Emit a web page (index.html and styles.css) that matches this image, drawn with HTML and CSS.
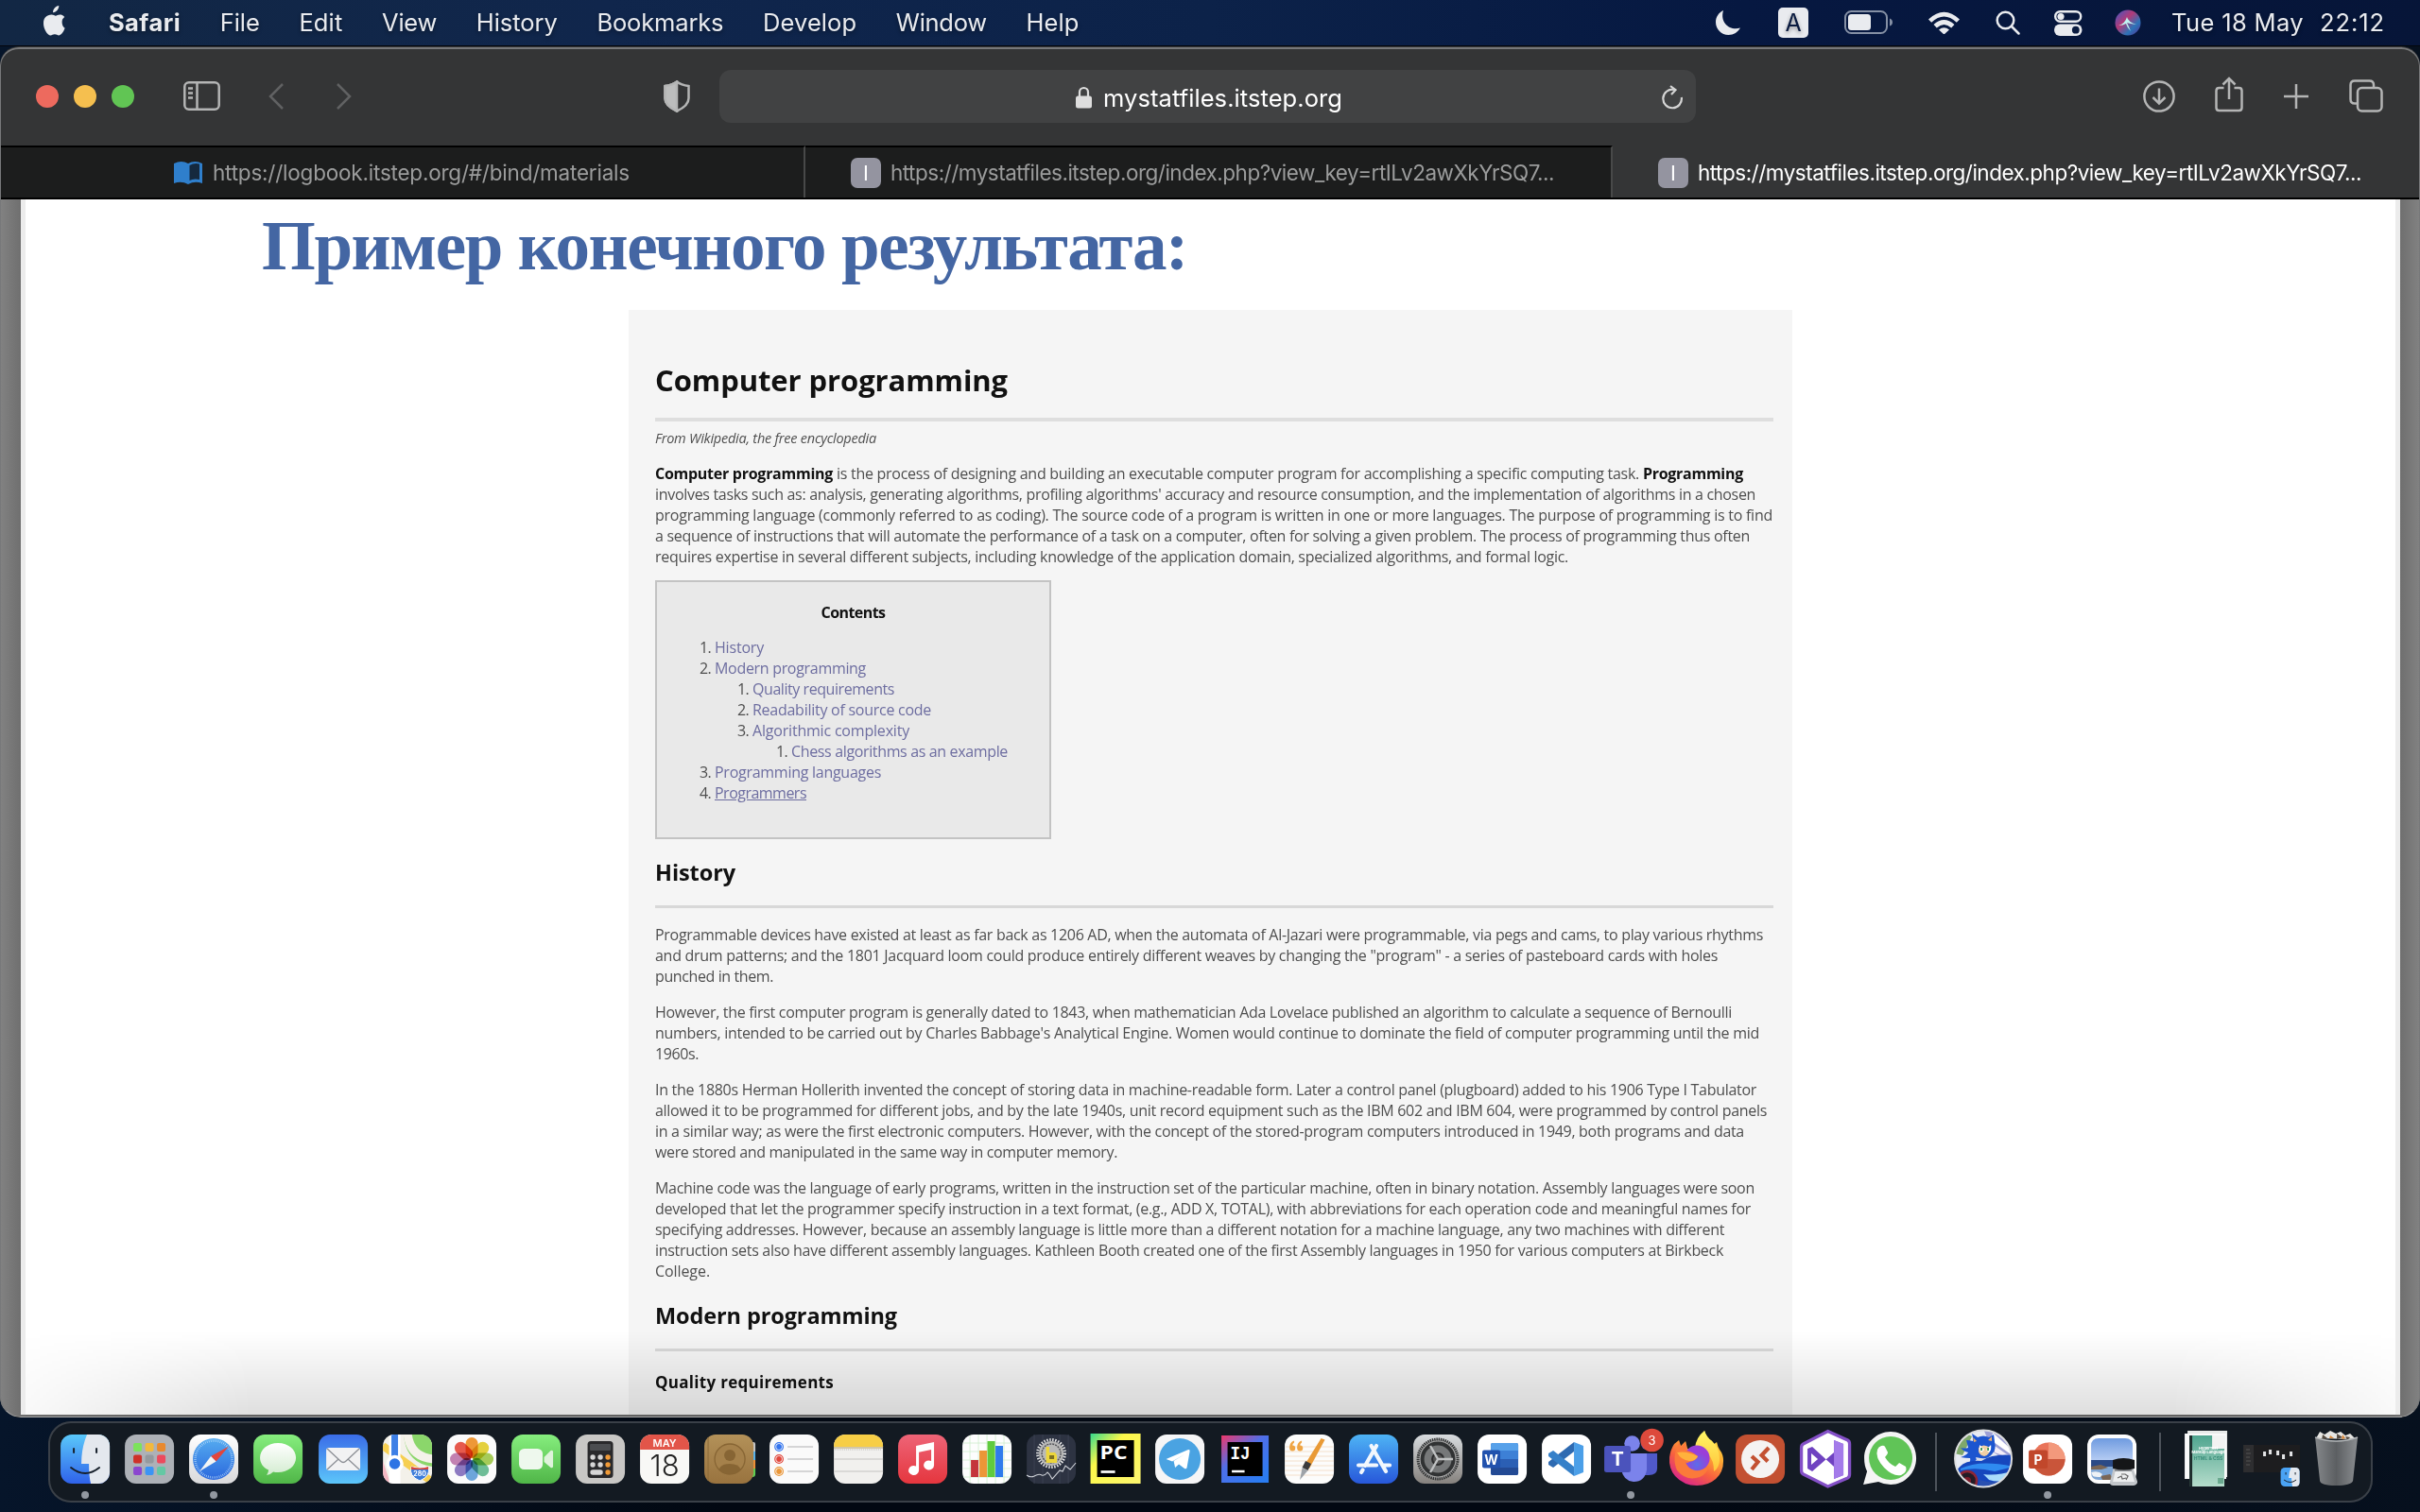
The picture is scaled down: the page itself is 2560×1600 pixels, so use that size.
FILE: index.html
```
<!DOCTYPE html>
<html lang="en">
<head>
<meta charset="utf-8">
<title>mystatfiles.itstep.org</title>
<link rel="stylesheet" href="styles.css">
</head>
<body>
<svg class="defs" width="0" height="0" aria-hidden="true">
<defs>
<linearGradient id="gBlue" x2="0" y2="1"><stop stop-color="#5ac8fa"/><stop offset="1" stop-color="#2f62ea"/></linearGradient>
<linearGradient id="gMail" x2="0" y2="1"><stop stop-color="#3a6ce8"/><stop offset="1" stop-color="#5cc6fa"/></linearGradient>
<linearGradient id="gGreen" x2="0" y2="1"><stop stop-color="#86ee7e"/><stop offset="1" stop-color="#50b648"/></linearGradient>
<linearGradient id="gWhite" x2="0" y2="1"><stop stop-color="#fff"/><stop offset="1" stop-color="#d9d9db"/></linearGradient>
<linearGradient id="gGrey" x2="0" y2="1"><stop stop-color="#d8dcdf"/><stop offset="1" stop-color="#86827e"/></linearGradient>
<linearGradient id="gRed" x2="0" y2="1"><stop stop-color="#ee6477"/><stop offset="1" stop-color="#e5363e"/></linearGradient>
<linearGradient id="gStore" x2="0" y2="1"><stop stop-color="#4eb4f5"/><stop offset="1" stop-color="#2757da"/></linearGradient>
<linearGradient id="gSafari" x2="0" y2="1"><stop stop-color="#55acf0"/><stop offset="1" stop-color="#2b68dd"/></linearGradient>
<linearGradient id="gPc" x2="1" y2="1"><stop stop-color="#35d98d"/><stop offset=".35" stop-color="#fcf84a"/><stop offset="1" stop-color="#fcf570"/></linearGradient>
<linearGradient id="gIj" x2=".8" y2="1"><stop stop-color="#f0386b"/><stop offset=".45" stop-color="#4f6fe8"/><stop offset="1" stop-color="#2a7cf2"/></linearGradient>
<linearGradient id="gBrown" x2="0" y2="1"><stop stop-color="#b39159"/><stop offset="1" stop-color="#99733f"/></linearGradient>
<linearGradient id="gFox" x1=".9" x2=".3" y2="1"><stop stop-color="#fff44f"/><stop offset=".35" stop-color="#ffb132"/><stop offset=".68" stop-color="#f7603f"/><stop offset="1" stop-color="#d9258c"/></linearGradient>
<linearGradient id="gFlame" x2="0" y2="1"><stop stop-color="#fff766"/><stop offset="1" stop-color="#ffc43a"/></linearGradient>
<radialGradient id="gGlobe" cy=".75"><stop stop-color="#5b6de8"/><stop offset="1" stop-color="#9a3fd8"/></radialGradient>
<linearGradient id="gTrash" x2="1" y2="0"><stop stop-color="#85888b"/><stop offset=".5" stop-color="#5c5f62"/><stop offset="1" stop-color="#8b8e91"/></linearGradient>
<linearGradient id="gDoc" x2="0" y2="1"><stop stop-color="#4fa58f"/><stop offset="1" stop-color="#b5dccb"/></linearGradient>
<linearGradient id="gSky" x2="0" y2="1"><stop stop-color="#6f9be0"/><stop offset="1" stop-color="#b7cdf3"/></linearGradient>
<linearGradient id="gBubble" x2="0" y2="1"><stop stop-color="#fff"/><stop offset="1" stop-color="#d3ecd0"/></linearGradient>
<linearGradient id="gSiri" x2="1" y2="1"><stop stop-color="#3a59c8"/><stop offset=".4" stop-color="#b23a78"/><stop offset=".7" stop-color="#2b74b8"/><stop offset="1" stop-color="#5a2a90"/></linearGradient>
</defs>
</svg>

<header class="menubar">
  <svg class="apple" width="26" height="32" viewBox="0 0 26 32"><path d="M18.3 0c.2 3.500-3 7.300-6.200 7.200C11.800 3.900 15 .4 18.300 0zM21.600 16.900c0-3 2.400-4.500 2.700-4.800-1.500-2.100-3.700-2.500-4.600-2.500-2-.2-3.800 1.100-4.800 1.100s-2.500-1.100-4.200-1.100C5.200 9.700 2 13 2 18.700c0 5.700 4.200 12.700 7.500 12.700 1.600 0 2.200-1.100 4.400-1.100 2.200 0 2.700 1.100 4.400 1.100 3.300 0 6-6.300 6.400-7.800-.1 0-3.100-1.400-3.100-6.700z"/></svg>
  <nav class="menus">
    <b data-w="76">Safari</b><span data-w="42">File</span><span data-w="46">Edit</span><span data-w="58">View</span><span data-w="86">History</span><span data-w="134">Bookmarks</span><span data-w="99">Develop</span><span data-w="96">Window</span><span data-w="56">Help</span>
  </nav>
  <div class="status">
    <svg width="26" height="26" viewBox="0 0 26 26"><path d="M8 0C3 2.500 0 7 0 12.500 0 20 6 26 13.500 26 19 26 23.500 23 26 18.500 16 22 4 14 8 0z"/></svg>
    <svg width="32" height="32" viewBox="0 0 32 32"><rect width="32" height="32" rx="5"/><text class="layout-key" x="16" y="25" text-anchor="middle">A</text></svg>
    <svg width="51" height="26" viewBox="0 0 51 26"><rect x="1" y="1" width="44" height="23" rx="6.500" fill="none" stroke="#8590a5" stroke-width="2"/><rect x="4" y="4" width="24" height="17" rx="3.500"/><path d="M48 8.500q3 1 3 4t-3 4z" fill="#8590a5"/></svg>
    <svg width="33" height="24" viewBox="0 0 33 24"><path d="M0 8.500Q16.500-7 33 8.500l-3.200 3.300Q16.500-1 3.200 11.800zM5.500 14q11-10 22 0l-3.300 3.400q-7.700-7-15.400 0zM11 19.500q5.500-4.500 11 0L16.500 24.500z"/></svg>
    <svg width="26" height="26" viewBox="0 0 26 26"><g fill="none" stroke="#e9ebef" stroke-width="2.500"><circle cx="10.500" cy="10.500" r="8.800"/><path d="M17 17l7.500 7.500" stroke-linecap="round"/></g></svg>
    <svg width="30" height="27" viewBox="0 0 30 27"><rect x="1.200" y="1.200" width="27" height="10.500" rx="5.200" fill="none" stroke="#e9ebef" stroke-width="2.400"/><circle cx="7" cy="6.500" r="3.600"/><rect y="14.500" width="29.500" height="12.500" rx="6.200"/><circle cx="22.800" cy="20.700" r="3.900" fill="#0a1b40"/></svg>
    <svg width="28" height="28" viewBox="0 0 28 28"><circle cx="14" cy="14" r="13.500" fill="url(#gSiri)"/><path d="M4 17q7-2 9-9 1 5 10 8-7-1-10-2 2 4 4 9-4-4-5-8-3 2-8 2z" fill="#bff3f2"/></svg>
    <time><span data-w="140">Tue 18 May</span><span data-w="69">22:12</span></time>
  </div>
</header>

<main class="window">
  <div class="toolbar">
    <div class="lights"><i class="red"></i><i class="yellow"></i><i class="green"></i></div>
    <svg class="sidebar-btn" width="39" height="31" viewBox="0 0 39 31"><rect x="1.300" y="1.300" width="36.400" height="28.400" rx="4.500"/><path d="M14.500 1v29M5 7.500h5M5 12.500h5M5 17.500h5"/></svg>
    <svg class="back" width="18" height="30" viewBox="0 0 18 30"><path d="M16 2L3 15l13 13"/></svg>
    <svg class="forward" width="18" height="30" viewBox="0 0 18 30"><path d="M2 2l13 13L2 28"/></svg>
    <svg class="shield" width="28" height="34" viewBox="0 0 28 34"><path d="M14 1.500C10 4.500 5.500 5.500 1.500 6v13c0 7 7 11 12.500 13.500 5.500-2.500 12.500-6.500 12.500-13.500V6C22.500 5.500 18 4.500 14 1.500z"/><path d="M14 1.500C10 4.500 5.500 5.500 1.500 6v13c0 7 7 11 12.500 13.500z" fill="#bcbdbd"/></svg>
    <div class="address">
      <svg width="17" height="24" viewBox="0 0 17 24"><path d="M4 11V6.500a4.500 4.500 0 019 0V11" fill="none" stroke="#dedede" stroke-width="2.200"/><rect y="10.500" width="17" height="13" rx="2.500" fill="#dedede"/></svg>
      <span data-w="253">mystatfiles.itstep.org</span>
      <svg class="reload" width="23" height="27" viewBox="0 0 23 27"><path d="M20.800 13a9.800 9.800 0 11-8-8.200M9 1l5.500 4.200L10 10"/></svg>
    </div>
    <div class="actions">
      <svg width="34" height="34" viewBox="0 0 34 34"><circle cx="17" cy="17" r="15.600"/><path d="M17 8.500v16M10.500 18l6.500 6.500 6.500-6.500"/></svg>
      <svg class="share" width="30" height="38" viewBox="0 0 30 38"><path d="M9.500 12H4.500q-3 0-3 3v18q0 3 3 3h21q3 0 3-3V15q0-3-3-3h-5M15 24V2M8.500 8.500L15 2l6.500 6.500"/></svg>
      <svg width="28" height="28" viewBox="0 0 28 28"><path d="M14 1v26M1 14h26"/></svg>
      <svg width="36" height="35" viewBox="0 0 36 35"><path d="M9 25.500H6q-4.500 0-4.500-4.500V6Q1.500 1.500 6 1.500h15.500Q26 1.500 26 6v3"/><rect x="9" y="9" width="25.500" height="24.500" rx="4.500"/></svg>
    </div>
  </div>
  <div class="tabs">
    <div class="tab">
      <svg width="32" height="26" viewBox="0 0 32 26"><path d="M1 3Q9-1 16 3q7-4 15 0v21q-8-3-15 1Q9 21 1 24z" fill="#2f7fcc"/><path d="M17.500 5q5-3 10.500-1.500V20q-6-1.500-10.500 1z" fill="#15293e"/></svg>
      <span data-w="441">https://logbook.itstep.org/#/bind/materials</span>
    </div>
    <div class="tab"><i>I</i><span data-w="702">https://mystatfiles.itstep.org/index.php?view_key=rtILv2awXkYrSQ7...</span></div>
    <div class="tab current"><i>I</i><span data-w="702">https://mystatfiles.itstep.org/index.php?view_key=rtILv2awXkYrSQ7...</span></div>
  </div>
  <div class="page">
    <div class="slide">
      <h1 class="slide-title"><span data-w="979">Пример конечного результата:</span></h1>
      <article class="article">
        <h1><span data-w="373">Computer programming</span></h1>
        <p class="source"><span data-w="234">From Wikipedia, the free encyclopedia</span></p>
        <p class="lead"><span data-w="1151"><b>Computer programming</b> is the process of designing and building an executable computer program for accomplishing a specific computing task. <b>Programming</b></span><span data-w="1164">involves tasks such as: analysis, generating algorithms, profiling algorithms' accuracy and resource consumption, and the implementation of algorithms in a chosen</span><span data-w="1182">programming language (commonly referred to as coding). The source code of a program is written in one or more languages. The purpose of programming is to find</span><span data-w="1158">a sequence of instructions that will automate the performance of a task on a computer, often for solving a given problem. The process of programming thus often</span><span data-w="966">requires expertise in several different subjects, including knowledge of the application domain, specialized algorithms, and formal logic.</span></p>
        <section class="contents">
          <h4><span data-w="68">Contents</span></h4>
          <ul>
            <li><em>1.</em><a data-w="52">History</a></li>
            <li><em>2.</em><a data-w="160">Modern programming</a></li>
            <li class="l2"><em>1.</em><a data-w="150">Quality requirements</a></li>
            <li class="l2"><em>2.</em><a data-w="189">Readability of source code</a></li>
            <li class="l2"><em>3.</em><a data-w="166">Algorithmic complexity</a></li>
            <li class="l3"><em>1.</em><a data-w="229">Chess algorithms as an example</a></li>
            <li><em>3.</em><a data-w="176">Programming languages</a></li>
            <li><em>4.</em><a class="hover" data-w="97">Programmers</a></li>
          </ul>
        </section>
        <h2><span data-w="85">History</span></h2>
        <p><span data-w="1172">Programmable devices have existed at least as far back as 1206 AD, when the automata of Al-Jazari were programmable, via pegs and cams, to play various rhythms</span><span data-w="1124">and drum patterns; and the 1801 Jacquard loom could produce entirely different weaves by changing the "program" - a series of pasteboard cards with holes</span><span data-w="125">punched in them.</span></p>
        <p><span data-w="1139">However, the first computer program is generally dated to 1843, when mathematician Ada Lovelace published an algorithm to calculate a sequence of Bernoulli</span><span data-w="1168">numbers, intended to be carried out by Charles Babbage's Analytical Engine. Women would continue to dominate the field of computer programming until the mid</span><span data-w="46">1960s.</span></p>
        <p><span data-w="1165">In the 1880s Herman Hollerith invented the concept of storing data in machine-readable form. Later a control panel (plugboard) added to his 1906 Type I Tabulator</span><span data-w="1176">allowed it to be programmed for different jobs, and by the late 1940s, unit record equipment such as the IBM 602 and IBM 604, were programmed by control panels</span><span data-w="1152">in a similar way; as were the first electronic computers. However, with the concept of the stored-program computers introduced in 1949, both programs and data</span><span data-w="489">were stored and manipulated in the same way in computer memory.</span></p>
        <p><span data-w="1163">Machine code was the language of early programs, written in the instruction set of the particular machine, often in binary notation. Assembly languages were soon</span><span data-w="1159">developed that let the programmer specify instruction in a text format, (e.g., ADD X, TOTAL), with abbreviations for each operation code and meaningful names for</span><span data-w="1131">specifying addresses. However, because an assembly language is little more than a different notation for a machine language, any two machines with different</span><span data-w="1130">instruction sets also have different assembly languages. Kathleen Booth created one of the first Assembly languages in 1950 for various computers at Birkbeck</span><span data-w="58">College.</span></p>
        <h2><span data-w="256">Modern programming</span></h2>
        <h3><span data-w="189">Quality requirements</span></h3>
      </article>
    </div>
  </div>
</main>

<footer class="dock">
  <svg viewBox="-8 -14 68 86"><rect width="52" height="52" rx="12" fill="url(#gBlue)"/><path d="M28 0h12a12 12 0 0112 12v28a12 12 0 01-12 12h-8q-2-7-2-21H22Q22 14 28 0z" fill="#e4e8ee"/><g fill="none" stroke="#17202b" stroke-width="2" stroke-linecap="round"><path d="M14 15v4M38 15v4M11 35q15 12 30 0"/></g><circle class="dot" cx="26" cy="64" r="4"/></svg>
  <svg viewBox="-8 -14 68 86"><rect width="52" height="52" rx="12" fill="#adb1b7"/><g><rect x="9" y="9" width="9" height="9" rx="2" fill="#7ce35b"/><rect x="21.500" y="9" width="9" height="9" rx="2" fill="#f2b93d"/><rect x="34" y="9" width="9" height="9" rx="2" fill="#e8892e"/><rect x="9" y="21.500" width="9" height="9" rx="2" fill="#cf3029"/><rect x="21.500" y="21.500" width="9" height="9" rx="2" fill="#94999e"/><rect x="34" y="21.500" width="9" height="9" rx="2" fill="#ec4a5d"/><rect x="9" y="34" width="9" height="9" rx="2" fill="#8b46cf"/><rect x="21.500" y="34" width="9" height="9" rx="2" fill="#3b94f5"/><rect x="34" y="34" width="9" height="9" rx="2" fill="#64c8a4"/></g></svg>
  <svg viewBox="-8 -14 68 86"><rect width="52" height="52" rx="12" fill="url(#gWhite)"/><circle cx="26" cy="26" r="22" fill="url(#gSafari)"/><circle cx="26" cy="26" r="19.500" fill="none" stroke="#c2dffa" stroke-width="2.500" stroke-dasharray=".6 1.400"/><path d="M42 12.500L23 23l5.500 5.500z" fill="#e2453c"/><path d="M11 39l12-16 5.500 5.500z" fill="#f4f5f5"/><circle class="dot" cx="26" cy="64" r="4"/></svg>
  <svg viewBox="-8 -14 68 86"><rect width="52" height="52" rx="12" fill="url(#gGreen)"/><path d="M26 9c11 0 19 7 19 15.500S37 40 26 40q-3 0-5-.5-3 3-7 3.500 2-3 2-5.500C10 35 7 30 7 24.500 7 16 15 9 26 9z" fill="url(#gBubble)"/></svg>
  <svg viewBox="-8 -14 68 86"><rect width="52" height="52" rx="12" fill="url(#gMail)"/><rect x="8" y="14" width="36" height="24" rx="3" fill="#f2f2f3"/><path d="M9 15l14 13q3 3 6 0l14-13M9 37l12-11M43 37L31 26" fill="none" stroke="#8d9096" stroke-width="1.300"/></svg>
  <svg viewBox="-8 -14 68 86"><clipPath id="cMap"><rect width="52" height="52" rx="12"/></clipPath><g clip-path="url(#cMap)"><rect width="52" height="52" fill="#f3f1ea"/><path d="M22 0h30v34Q24 30 22 0z" fill="#8bd66b"/><path d="M26-2q2 26 28 28" fill="none" stroke="#f5f2ea" stroke-width="9"/><path d="M0 12l52 38" stroke="#f6cf51" stroke-width="8"/><path d="M0 28l8 24H0z" fill="#f4b7c3"/><path d="M12.500 0v52" stroke="#fff" stroke-width="12"/><path d="M12.500 0v26" stroke="#3d7fe6" stroke-width="7"/></g><circle cx="12.500" cy="31" r="7.500" fill="#2e74e4" stroke="#fff" stroke-width="3.500"/><path d="M30 34q9 3 18 0 3 10-9 15-12-5-9-15z" fill="#3b7bd9" stroke="#fff"/><path d="M30 34q9 3 18 0v3H30z" fill="#d9443a"/><text class="shield-no" x="39" y="44">280</text></svg>
  <svg viewBox="-8 -14 68 86"><rect width="52" height="52" rx="12" fill="#fbfbfb"/><g class="petals"><rect x="19.500" y="3" width="13" height="22" rx="6.500" fill="#f29b38"/><rect x="19.500" y="3" width="13" height="22" rx="6.500" fill="#e8d43f" transform="rotate(45 26 26)"/><rect x="19.500" y="3" width="13" height="22" rx="6.500" fill="#a9cf59" transform="rotate(90 26 26)"/><rect x="19.500" y="3" width="13" height="22" rx="6.500" fill="#70c09a" transform="rotate(135 26 26)"/><rect x="19.500" y="3" width="13" height="22" rx="6.500" fill="#6fa8df" transform="rotate(180 26 26)"/><rect x="19.500" y="3" width="13" height="22" rx="6.500" fill="#8f7cc4" transform="rotate(225 26 26)"/><rect x="19.500" y="3" width="13" height="22" rx="6.500" fill="#c583b4" transform="rotate(270 26 26)"/><rect x="19.500" y="3" width="13" height="22" rx="6.500" fill="#ea5b4e" transform="rotate(315 26 26)"/></g></svg>
  <svg viewBox="-8 -14 68 86"><rect width="52" height="52" rx="12" fill="url(#gGreen)"/><rect x="8" y="15" width="25" height="22" rx="5.500" fill="#eef8ed"/><path d="M34.500 24l7-7q2.500-1 2.500 1.500v15q0 2.500-2.500 1.500l-7-6z" fill="#dff3dc"/></svg>
  <svg viewBox="-8 -14 68 86"><rect width="52" height="52" rx="12" fill="#c8c7c5"/><rect x="12.500" y="7" width="27" height="39" rx="3.500" fill="#29292b"/><rect x="15" y="10" width="22" height="7" rx="1" fill="#4b4d50"/><g fill="#d6d6d6"><circle cx="18" cy="24" r="2.700"/><circle cx="26" cy="24" r="2.700"/><circle cx="18" cy="32" r="2.700"/><circle cx="26" cy="32" r="2.700"/><rect x="15.300" y="37.300" width="13.400" height="5.400" rx="2.700"/></g><g fill="#f09a37"><circle cx="34" cy="24" r="2.700"/><circle cx="34" cy="32" r="2.700"/><circle cx="34" cy="40" r="2.700"/></g></svg>
  <svg viewBox="-8 -14 68 86"><rect width="52" height="52" rx="12" fill="#f8f8f6"/><path d="M0 16v-4A12 12 0 0112 0h28a12 12 0 0112 12v4z" fill="#e25549"/><text class="cal-month" x="26" y="12.500">MAY</text><text class="cal-day" x="26" y="43.500">18</text></svg>
  <svg viewBox="-8 -14 68 86"><path d="M49 8h3q2 0 2 2v8h-5z" fill="#c4c4c4"/><path d="M49 18h5v9h-5z" fill="#58b3ec"/><path d="M49 27h5v9h-5z" fill="#ee8f37"/><path d="M49 36h5v6q0 3-3 3h-2z" fill="#5fce52"/><rect width="52" height="52" rx="12" fill="url(#gBrown)"/><path d="M4 3v46" stroke="#8b6a3a"/><circle cx="27" cy="26" r="16" fill="#a5814b" stroke="#876534" stroke-width="1.300"/><circle cx="27" cy="22" r="6" fill="#876534"/><path d="M15.500 37q2-6 11.500-6t11.500 6q-4 5-11.500 5t-11.500-5z" fill="#876534"/></svg>
  <svg viewBox="-8 -14 68 86"><rect width="52" height="52" rx="12" fill="#fafafa"/><path d="M19 13h27M19 26h27M19 39h27" stroke="#c9c9ca" stroke-width="1.500"/><g stroke-width="1.200"><circle cx="10" cy="13" r="4.300" fill="none" stroke="#3374ee"/><circle cx="10" cy="13" r="2.900" fill="#3374ee"/><circle cx="10" cy="26" r="4.300" fill="none" stroke="#e1473c"/><circle cx="10" cy="26" r="2.900" fill="#e1473c"/><circle cx="10" cy="39" r="4.300" fill="none" stroke="#ea9638"/><circle cx="10" cy="39" r="2.900" fill="#ea9638"/></g></svg>
  <svg viewBox="-8 -14 68 86"><rect width="52" height="52" rx="12" fill="#f1f0ee"/><path d="M0 13v-1A12 12 0 0112 0h28a12 12 0 0112 12v1z" fill="#f7ce46"/><path d="M0 14h52" stroke="#b39e63"/><path d="M1 16h50" stroke="#bbb" stroke-dasharray="1 1"/><path d="M0 26h52M0 39h52" stroke="#d2d1cf" stroke-width="1.300"/></svg>
  <svg viewBox="-8 -14 68 86"><rect width="52" height="52" rx="12" fill="url(#gRed)"/><path d="M19 12l19-4v24.500a5.500 5 0 11-3-4.500V16l-13 2.800V38a5.500 5 0 11-3-4.500z" fill="#fff"/></svg>
  <svg viewBox="-8 -14 68 86"><rect width="52" height="52" rx="12" fill="#fdfdfd"/><path d="M8 1v50M17 0v52M26 0v52M35 0v52M44 1v50M1 9h50M0 18h52M0 27h52M0 36h52M1 45h50" stroke="#cdeccb" stroke-width=".8"/><path d="M9 27h8v18H9z" fill="#c4343c"/><path d="M18 17h8v28h-8z" fill="#ec9637"/><path d="M26.500 7h8v38h-8z" fill="#60cb3e"/><path d="M35 12h8v33h-8z" fill="#2f7bec"/></svg>
  <svg viewBox="-8 -14 68 86"><rect width="52" height="52" rx="12" fill="#2d3342"/><path d="M8 0v52M17 0v52M35 0v52M44 0v52" stroke="#3c4252"/><circle cx="26" cy="20" r="13" fill="#b9b9b8"/><circle cx="26" cy="20" r="14.500" fill="none" stroke="#e4e4e4" stroke-width="3" stroke-dasharray="1.500 1.500"/><circle cx="26" cy="20" r="10" fill="none" stroke="#55565a" stroke-width="1.500" stroke-dasharray="2 1"/><path d="M20.500 13h3.500v6h6l2 3v8H20.500z" fill="#ecd63c"/><path d="M24 22h5v4h-5z" fill="#7c6f22"/><path d="M0 43q4 3 8 1 5-3 8-1 3 1 6-3l2 2 3 5 8-9 3 1 3-6 5 4 6-7" fill="none" stroke="#cfd2d8" stroke-width="1.100"/></svg>
  <svg viewBox="-8 -14 68 86"><rect x="-.5" y="-1" width="53" height="53" fill="url(#gPc)"/><rect x="6.500" y="6" width="39" height="39"/><text class="ide" x="9.500" y="25.500" textLength="29" lengthAdjust="spacingAndGlyphs">PC</text><path d="M10.500 39.500h15" stroke="#fff" stroke-width="2.700"/></svg>
  <svg viewBox="-8 -14 68 86"><rect width="52" height="52" rx="12" fill="#f5f5f6"/><circle cx="26" cy="26" r="22" fill="#4aa3e2"/><path d="M11.500 26L35 16q2-.5 1.500 2l-3 17q-.5 2-2.500 1l-6-4.500-4 3.500-1.500-7L31 21 18 28.500z" fill="#fff"/></svg>
  <svg viewBox="-8 -14 68 86"><rect x="1" y="1" width="50" height="50" fill="url(#gIj)"/><rect x="7.500" y="8" width="37" height="36"/><text class="ide mono" x="10.500" y="26" textLength="21" lengthAdjust="spacingAndGlyphs">IJ</text><path d="M12 39h13.500" stroke="#fff" stroke-width="2.500"/></svg>
  <svg viewBox="-8 -14 68 86"><rect width="52" height="52" rx="12" fill="#fcfcfb"/><path d="M1 13h50M0 18h52M0 23h52M0 28h52M0 33h52M0 38h52M1 43h50" stroke="#f4ddc5" stroke-width=".9"/><path d="M5 14q0-6 5-7.500v2Q8 10 8.200 11.500q3 0 3 3t-3 3T5 14zM13 14q0-6 5-7.500v2q-2 1.500-1.800 3 3 0 3 3t-3 3T13 14z" fill="#efa544"/><path d="M38.500 4l4 1.500L26 36l-5.500-3z" fill="#e99a35"/><path d="M22 28l6 3-3.500 7-6-3z" fill="#3a3a3c"/><path d="M18.500 35l6 3-8.500 10z" fill="#9ea3a8"/></svg>
  <svg viewBox="-8 -14 68 86"><rect width="52" height="52" rx="12" fill="url(#gStore)"/><g stroke="#f2f7fd" stroke-width="4.200" stroke-linecap="round"><path d="M29 12L17 33M23.500 12L39 39M10 32.500h19M37 32.500h6M14.500 37.500L13 40"/></g></svg>
  <svg viewBox="-8 -14 68 86"><rect width="52" height="52" rx="12" fill="url(#gGrey)"/><circle cx="26" cy="26" r="21" fill="#aaa" stroke="#333536" stroke-width="3" stroke-dasharray="1.500 .8"/><circle cx="26" cy="26" r="16.500" fill="#767879" stroke="#303233" stroke-width="4"/><circle cx="26" cy="26" r="6" fill="#555" stroke="#2c2d2e" stroke-width="2"/><path d="M26 26h16M26 26l-8-14M26 26l-8 14" stroke="#c0c2c3" stroke-width="2.400"/></svg>
  <svg viewBox="-8 -14 68 86"><rect width="52" height="52" rx="12" fill="#fff"/><rect x="14" y="9" width="29" height="34" rx="2" fill="#2b5fb4"/><path d="M14 17v-6q0-2 2-2h25q2 0 2 2v6z" fill="#57a1ea"/><path d="M14 17h29v9H14z" fill="#3d80d6"/><path d="M14 35h29v6q0 2-2 2H16q-2 0-2-2z" fill="#234a94"/><rect x="5" y="16.500" width="19" height="19" rx="2" fill="#2151ad"/><text class="glyph" x="14.500" y="31.500">W</text></svg>
  <svg viewBox="-8 -14 68 86"><rect width="52" height="52" rx="12" fill="#fff"/><path d="M34 8l10 4v28l-10 4z" fill="#4b9fe8"/><path d="M34 8v10L12 35l-5-3v-3z" fill="#2e6ab1"/><path d="M34 44V34L12 17l-5 3v3z" fill="#3580c9"/></svg>
  <svg viewBox="-8 -14 68 86"><circle cx="27.500" cy="9.500" r="8.300" fill="#7b83eb"/><circle cx="43" cy="10" r="6" fill="#5059c9"/><path d="M36 20h18v16q0 7-9 7h-9z" fill="#5059c9"/><path d="M17 20h26v17q-2 13-14 13-11-1-13-13z" fill="#7b83eb"/><rect x="-2" y="12" width="28" height="28" rx="2.500" fill="#4b53bc"/><text class="glyph t" x="12" y="33">T</text><circle cx="48.500" cy="6" r="12.300" fill="#dd4a3c"/><text class="badge" x="48.500" y="10.500">3</text><circle class="dot" cx="26" cy="64" r="4"/></svg>
  <svg viewBox="-8 -14 68 86"><path d="M35-4q2 7 8 11 1 2 1 4l4-3q1 5 3 8 4 5 4 12 0 12-8 19-8 7-20 7-14 0-23-10Q-3 36-2 24-1 16 3 10l5-4 2 6 5-5 2 8q4 0 10 1 2-12 8-20z" fill="url(#gFox)"/><path d="M35-4q2 7 8 11 8 7 8 19 0 9-6 13 0-12-6-18-8-3-14-7 1-11 10-18z" fill="url(#gFlame)"/><circle cx="27" cy="25" r="13.500" fill="url(#gGlobe)"/><path d="M8 8l2 5 5-5 1 9q6 1 12 6-2 5-9 6-3 2-4 0 2 7 10 9 8 1 14-5 0 8-9 12-14 5-24-7-6-13 2-30z" fill="#fb7a3a"/><path d="M6 19q10-2 22 4-2 5-9 5-9-1-13-9z" fill="#ffb23c"/></svg>
  <svg viewBox="-8 -14 68 86"><rect width="52" height="52" rx="12" fill="#c35132"/><circle cx="26" cy="26" r="20" fill="#f5f3f2"/><path d="M17 23l6.500 6-6.500 8M35 14l-7.500 8 6.500 6.500" fill="none" stroke="#c35132" stroke-width="4.200"/></svg>
  <svg viewBox="-8 -14 68 86"><path d="M28-3.500l21 9.500q2 1 2 4v32q0 3-2 4l-21 9L2 42q-2-1-2-4V14q0-3 2-4z" fill="#fff" stroke="#8450c7" stroke-width="3.300" transform="translate(1.500 0)"/><path d="M36 6v13L13 39l-5-3V15l5-2 23 21v13l10-4V10z" fill="#6f42c1"/><path d="M36 6l10 4v33l-10 4z" fill="#a47bea"/><path d="M12 20v12l7-6z" fill="#fff"/></svg>
  <svg viewBox="-8 -14 68 86"><path d="M28-3c15 0 27 12.500 27 28S43 53 28 53q-7 0-13-3L-1 53l4-14q-3-6-3-14C0 9.500 13-3 28-3z" fill="#f4f4f4"/><circle cx="28" cy="25" r="23" fill="#60c457"/><path d="M18 12q3-1 4 1l3 6q0 2-3 5 4 7 11 10l4-4 7 4q2 6-5 9-8 2-18-8-10-11-7-19 1-3 4-4z" fill="#fff"/></svg>
  <span class="divider"></span>
  <svg viewBox="-8 -14 68 86"><clipPath id="cKart"><circle cx="26" cy="25.500" r="30"/></clipPath><g clip-path="url(#cKart)"><rect x="-6" y="-6" width="64" height="64" fill="#e8ebf3"/><path d="M-5 20L6-2l8 4L4 22z" fill="#7fa86b"/><path d="M26-6h32v40L36 18z" fill="#9c9fd6"/><path d="M36-2l22 20v5L34 6z" fill="#fff"/><path d="M38 12l20 14-20-7z" fill="#f4eef9"/><path d="M8 6q4 0 7 1 0-5-1-8l6 4q6-3 12 0l5-3 1 8q2 8-3 13-5 6-14 4-5 4-12 10 4-7 3-10Q7 25 2 24q6-2 8-5-5-1-8-5 4 1 8 0-1-4-2-8z" fill="#1c55d0"/><path d="M15 3l4 4-3 1zM35 2l-4 4 4 1z" fill="#e9b06f"/><path d="M21 14q5-5 12 0 0 8-6 9-7-1-6-9z" fill="#f0cfa4"/><path d="M22 11l5 5-3 3q-3-3-2-8zM34 11l-5 5 3 3q3-3 2-8z" fill="#fff"/><path d="M24 14v3M31 14v3" stroke="#1f7d3a" stroke-width="1.600"/><path d="M18 24l10 2 4 5-12 1z" fill="#d9dce6"/><path d="M-4 42q6-16 28-14 12-8 34-6v36H6z" fill="#1747bd"/><path d="M2 36q20-10 56-2l-20 5Q18 34 2 38z" fill="#2f8bf0"/><path d="M26 42q16 2 32-4v8q-14 6-26 2z" fill="#a9dcfb"/><path d="M22 48q20 6 36-2v12H22z" fill="#2a50b0"/><circle cx="9" cy="49" r="10" fill="#241c26" stroke="#8e2534" stroke-width="2.500"/><circle cx="9" cy="49" r="4" fill="#7c1d2b"/></g><circle cx="26" cy="25.500" r="30" fill="none" stroke="#dcdddf" stroke-width="2"/></svg>
  <svg viewBox="-8 -14 68 86"><rect width="52" height="52" rx="12" fill="#fff"/><circle cx="27" cy="26" r="17.500" fill="#e9745a"/><path d="M27 8.500A17.500 17.500 0 0144.500 26H27z" fill="#f3997c"/><path d="M9.500 26h35a17.500 17.500 0 01-35 0z" fill="#c9553a"/><rect x="6" y="16.500" width="20" height="19.500" rx="2" fill="#c1472b"/><text class="glyph" x="16" y="31.500">P</text><circle class="dot" cx="26" cy="64" r="4"/></svg>
  <svg viewBox="-8 -14 68 86"><rect width="52" height="52" rx="12" fill="#fdfdfd"/><path d="M4 28V12q0-8 8-8h28q8 0 8 8v16z" fill="url(#gSky)"/><path d="M4 27h44v8H4z" fill="#2b4a86"/><path d="M4 34h44v6q0 8-8 8H12q-8 0-8-8z" fill="#7fa6d4"/><path d="M4 34l10-2 8 3-7 2H4zM14 44l10-2 4 6H16z" fill="#7a6655"/><path d="M4 40q8-2 12 2l-2 3q-6 0-8-1z" fill="#eef2f6"/><path d="M28 34h20l5 16q0 3-4 4H27q-4-1-3-4z" fill="#c2c6ca"/><path d="M30 37h16l4 13H27z" fill="#eceeef"/><path d="M29 38h18" stroke="#8c9094" stroke-width="2"/><path d="M27 27q11-4 23 0v9q-11 3-23 0z" fill="#151618"/><path d="M32 46l4-2 1 3 4-1M36 42h4l3 2-2 4" fill="none" stroke="#666" stroke-width="1.200"/></svg>
  <span class="divider"></span>
  <svg viewBox="-8 -14 68 86"><path d="M5-4h42v49H5z" fill="#e8eae9"/><path d="M2-1h44v48H2z" fill="#fafafa"/><path d="M7 1h37v54H7z" fill="url(#gDoc)"/><path d="M7 1h3v54H7z" fill="#1e2d2d"/><path d="M31 1h13v14H31z" fill="#f2f3f2"/><text class="cover" x="27" y="16">HyperText</text><text class="cover" x="27" y="20">Markup Language</text><text class="cover dark" x="27" y="26.500">HTML &amp; CSS</text><path d="M37 46h6v6h-6z" fill="#6aa98f"/></svg>
  <svg viewBox="-8 -14 68 86"><rect x="-4" y="11" width="60" height="29" fill="#1d1d1f"/><rect x="-4" y="11" width="11" height="29" fill="#2e2e30"/><path d="M-1 16h4M-1 20h5M-1 24h4M-1 28h5M-1 32h4" stroke="#555"/><path d="M17 18h3v5h-3zM23 16h3v5h-3zM31 17h3v5h-3zM37 21h3v5h-3zM45 18h3v5h-3z" fill="#e4e5e6"/><rect x="35.500" y="35" width="20" height="20" rx="4.500" fill="#4aa3f4"/><path d="M46.500 35h4.500q4.500 0 4.500 4.500v11q0 4.500-4.500 4.500h-3q-1-3-1-9h-3q0-6 2.500-11z" fill="#e4e8ee"/><path d="M39 48q7 5 13 0M41 40v2.500M51 40v2.500" fill="none" stroke="#17202b"/></svg>
  <svg viewBox="-8 -14 68 86"><path d="M5 4l4-7 5 3 6-4 6 3 5-2 5 4 5-2 6 6z" fill="#e6e5e2"/><path d="M12 0l5 4-6 1zM27-1l6 4-6 2zM36 2l5 1-3 3z" fill="#54493f"/><path d="M20 1l4 3h-5zM33 0l3 4-4 1z" fill="#d98a3e"/><path d="M4 3q22 8 45 0l-5 46q-2 5-18 5T9 49z" fill="url(#gTrash)"/><path d="M4 3q22 8 45 0" fill="none" stroke="#b5b8ba" stroke-width="1.500"/></svg>
</footer>
<script src="fit.js"></script>
</body>
</html>
```
FILE: styles.css
```
* { box-sizing: border-box; margin: 0; padding: 0; }
html, body { width: 2560px; height: 1600px; overflow: hidden; }
body {
  display: flex; flex-direction: column;
  background: linear-gradient(90deg, #06152a, #020812 30%, #020812 70%, #06101e);
  font-family: Inter, "Liberation Sans", sans-serif;
}
.defs { position: absolute; }
[data-w] { white-space: nowrap; }

.menubar {
  flex: 0 0 49px; display: flex; align-items: flex-start;
  padding: 0 37px 0 44px;
  background: linear-gradient(90deg, #122744, #10264c 25%, #0c2249 50%, #061841 72%, #061538);
  border-bottom: 1px solid #03060c;
  color: #e9ebef; font-size: 25.500px; line-height: 48px;
  text-shadow: 0 2px 4px rgba(0, 0, 0, .4);
}
.menubar svg { fill: #e9ebef; }
.apple { margin-top: 6px; }
.menus { display: flex; gap: 41.700px; margin-left: 45px; height: 48px; }
.status { display: flex; align-items: center; margin-left: auto; height: 48px; }
.status svg + svg { margin-left: 38px; }
.status svg:nth-child(2) { margin-left: 40px; }
.status svg:nth-child(7) { margin-left: 34px; }
.status svg:nth-child(6) { margin-left: 36px; }
.status time { display: flex; gap: 17px; margin-left: 32px; }
.layout-key { font-size: 25px; fill: #0a1b40; }

.window {
  flex: 0 0 1451px; display: flex; flex-direction: column; position: relative;
  overflow: hidden; border-radius: 20px 20px 22px 22px; background: #343536;
}
.window::after {
  content: ""; position: absolute; inset: 1px 0 0; pointer-events: none;
  border: 1px solid #77787a; border-top-width: 2px; border-bottom-color: #a5a5a5; border-radius: inherit;
}
.toolbar { flex: 0 0 105px; display: flex; align-items: center; padding: 0 39px 0 38px; }
.toolbar svg { fill: none; stroke: #b4b5b5; stroke-width: 2.500; }
.lights { display: flex; gap: 16px; }
.lights i { width: 24px; height: 24px; border-radius: 50%; }
.red { background: #ed6a5e; }
.yellow { background: #f5bf4f; }
.green { background: #61c554; }
.sidebar-btn { margin-left: 52px; }
.toolbar .back, .toolbar .forward { stroke: #606162; }
.back { margin-left: 50px; }
.forward { margin-left: 54px; }
.shield { margin-left: 329px; }
.address {
  display: flex; align-items: center; width: 1033px; height: 56px; margin: 1px 0 0 31px;
  padding: 2px 0 0 377px; border-radius: 12px; background: #414243; color: #fff; font-size: 25.500px;
}
.address span { margin-left: 12px; }
.address svg { stroke: none; }
.address .reload { margin: 0 13px 0 auto; stroke: #d4d4d4; stroke-width: 2.200; }
.actions { display: flex; align-items: center; gap: 42px; margin-left: auto; }
.share { margin-bottom: 4px; }

.tabs { flex: 0 0 57px; display: flex; border-bottom: 2px solid #000; }
.tab {
  display: flex; align-items: center; gap: 10px; width: 852px; padding-left: 48px;
  background: #1c1d1d; border-top: 2px solid #000; border-right: 2px solid #484949;
  color: #9b9c9c; font-size: 22.500px;
}
.tab:first-child { padding-left: 183px; }
.tab:nth-child(2) { width: 854px; }
.tab.current { flex: 1; background: none; border-color: transparent; color: #fff; }
.tab i {
  width: 32px; height: 32px; border-radius: 7px; background: #9494a0;
  color: #fff; font: 22px/32px Inter, sans-serif; text-align: center;
}

.page {
  flex: 1; position: relative; padding: 0 21px 0 22px; border-bottom: 1px solid #000;
  background: linear-gradient(90deg, #828282, #6f6f6f 22px, #6f6f6f 2539px, #828282);
}
.page::after {
  content: ""; position: absolute; left: 27px; right: 26px; bottom: 0; height: 90px;
  background: linear-gradient(rgba(0, 0, 0, 0), rgba(0, 0, 0, .13));
  -webkit-mask-image: linear-gradient(90deg, rgba(0, 0, 0, .2), #000 240px, #000 2270px, rgba(0, 0, 0, .2));
}
.slide { height: 1286px; padding: 0 0 0 638px; border: solid #ececec; border-width: 0 5px; background: #fff; overflow: hidden; }
.slide-title {
  height: 117px; margin-left: -388px; padding-top: 10px;
  color: #4466a3; font: bold 73px/80px "Liberation Serif", serif;
}

.article {
  width: 1231px; height: 1180px; padding: 54px 20px 0 28px; overflow: hidden;
  background: #f5f5f5; color: #4e4e4e; font: 16px/21.920px "Open Sans", "Noto Sans", sans-serif;
}
.article p > span { display: table; }
.article b, .article h1, .article h2, .article h3, .article h4 { color: #111; }
.article h1 { height: 64px; padding-bottom: 20px; border-bottom: 4px solid #dedede; font-size: 31px; line-height: 40px; }
.article .source { margin-top: 7px; font-size: 14.500px; line-height: 22px; font-style: italic; }
.article p { margin-top: 16.200px; }
.article h2 { height: 53px; margin: 20px 0 18px; border-bottom: 3px solid #d8d8d8; font-size: 23.500px; line-height: 30px; }
.article h3 { font-size: 17px; line-height: 22px; margin-top: 22px; }
.contents { width: 419px; height: 274px; margin: 13px 0 20.500px; padding-top: 21px; border: 2px solid #c3c3c3; background: #e9e9e9; }
.contents h4 { font-size: 16px; line-height: 22px; text-align: center; }
.contents ul { margin-top: 16.500px; list-style: none; }
.contents li { display: flex; height: 22px; padding-left: 45px; }
.contents .l2 { padding-left: 85px; }
.contents .l3 { padding-left: 126px; }
.contents em { width: 16px; font-style: normal; letter-spacing: -.7px; }
.contents a { color: #6d6da0; }
.contents .hover { text-decoration: underline; }

.dock {
  flex: 0 0 86px; display: flex; width: 2459px; margin: 4px 0 0 51px; padding: 0 5px;
  border-radius: 24px; background: #131a22; box-shadow: inset 0 0 0 2px #3a4048;
}
.dock svg { flex: 0 0 68.150px; height: 86px; overflow: visible; }
.dock .dot { fill: #9298a1; }
.divider { flex: 0 0 32px; display: flex; justify-content: center; padding: 12px 0; }
.divider::before { content: ""; width: 2px; background: #4d535b; }
.petals rect { mix-blend-mode: multiply; }
.dock text { fill: #fff; text-anchor: middle; font-family: Inter, sans-serif; }
.shield-no { font-size: 7px; font-weight: 700; }
.dock .cal-month { font-size: 11px; font-weight: 600; }
.dock .cal-day { font-size: 31px; font-weight: 300; fill: #222; }
.dock .ide { text-anchor: start; font: 700 20px "Open Sans", sans-serif; }
.dock .ide.mono { font: 700 21px "Liberation Mono", monospace; }
.glyph { font-size: 14px; font-weight: 700; }
.glyph.t { font-size: 20px; }
.badge { font-size: 13px; }
.dock .cover { font-size: 4px; font-weight: 700; }
.dock .cover.dark { font-size: 5px; fill: #3c8e7b; }
```
FILE: fit.js
```
// Tracks each line of text so that it fills the measure given in data-w.
for (const line of document.querySelectorAll('[data-w]')) {
  const natural = line.getBoundingClientRect().width;
  const spacing = (Number(line.dataset.w) - natural) / line.textContent.length;
  line.style.letterSpacing = spacing.toFixed(3) + 'px';
}
```
